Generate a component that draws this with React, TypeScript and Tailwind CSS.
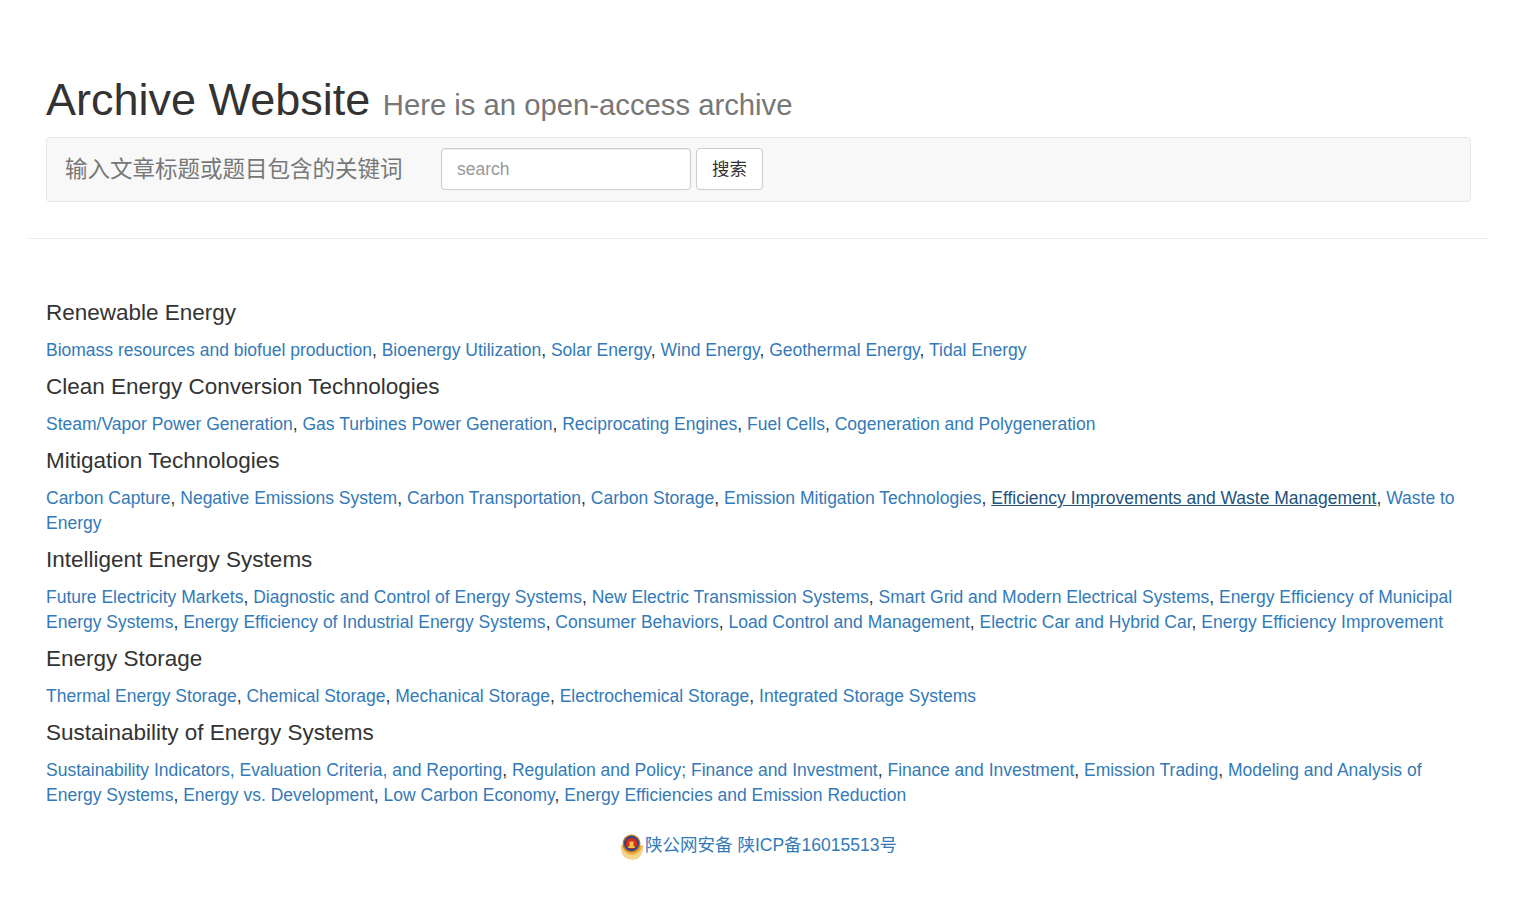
const sections: { title: string; links: string[] }[] = [
  {
    title: "Renewable Energy",
    links: [
      "Biomass resources and biofuel production",
      "Bioenergy Utilization",
      "Solar Energy",
      "Wind Energy",
      "Geothermal Energy",
      "Tidal Energy",
    ],
  },
  {
    title: "Clean Energy Conversion Technologies",
    links: [
      "Steam/Vapor Power Generation",
      "Gas Turbines Power Generation",
      "Reciprocating Engines",
      "Fuel Cells",
      "Cogeneration and Polygeneration",
    ],
  },
  {
    title: "Mitigation Technologies",
    links: [
      "Carbon Capture",
      "Negative Emissions System",
      "Carbon Transportation",
      "Carbon Storage",
      "Emission Mitigation Technologies",
      "Efficiency Improvements and Waste Management",
      "Waste to Energy",
    ],
  },
  {
    title: "Intelligent Energy Systems",
    links: [
      "Future Electricity Markets",
      "Diagnostic and Control of Energy Systems",
      "New Electric Transmission Systems",
      "Smart Grid and Modern Electrical Systems",
      "Energy Efficiency of Municipal Energy Systems",
      "Energy Efficiency of Industrial Energy Systems",
      "Consumer Behaviors",
      "Load Control and Management",
      "Electric Car and Hybrid Car",
      "Energy Efficiency Improvement",
    ],
  },
  {
    title: "Energy Storage",
    links: [
      "Thermal Energy Storage",
      "Chemical Storage",
      "Mechanical Storage",
      "Electrochemical Storage",
      "Integrated Storage Systems",
    ],
  },
  {
    title: "Sustainability of Energy Systems",
    links: [
      "Sustainability Indicators, Evaluation Criteria, and Reporting",
      "Regulation and Policy; Finance and Investment",
      "Finance and Investment",
      "Emission Trading",
      "Modeling and Analysis of Energy Systems",
      "Energy vs. Development",
      "Low Carbon Economy",
      "Energy Efficiencies and Emission Reduction",
    ],
  },
];

const Emblem = () => (
  <svg width="24" height="26" viewBox="0 0 24 26" className="shrink-0">
    <path d="M1 11 C0 17 3 24 8 25 C11 26 14 26 17 25 C21 23 24 17 23 11 Z" fill="#f5d48c" />
    <path d="M2 12 C3 17 6 20 12 21 C18 20 21 17 22 12 Z" fill="#eaae3f" />
    <circle cx="11.5" cy="9.5" r="9" fill="#b9762e" />
    <circle cx="11.5" cy="9.5" r="7.5" fill="#28408e" />
    <circle cx="11.5" cy="9.5" r="5.8" fill="#d0301f" />
    <path d="M8 12.5 h7 v1.5 h-7 Z M9.5 7.5 h4 v5 h-4 Z" fill="#eec04a" />
  </svg>
);

export default function App() {
  return (
    <div className="min-h-[898px] bg-white pl-[27px] pr-[32px] pt-[73px] font-['Liberation_Sans','Noto_Sans_CJK_SC',sans-serif] text-[17.5px] leading-[25px] text-[#333]">
      <div className="pl-[19px] pr-[17px]">
        <h1 className="text-[45px] font-medium leading-[54px] text-[#333]">
          Archive Website{" "}
          <span className="text-[29.25px] font-normal leading-none text-[#777]">
            Here is an open-access archive
          </span>
        </h1>
        <div className="mt-[10px] flex h-[65px] items-start rounded border border-[#e7e7e7] bg-[#f8f8f8] pl-[18px] pt-[10px]">
          <span className="w-[376px] text-[22.5px] leading-[44px] text-[#777]">
            输入文章标题或题目包含的关键词
          </span>
          <input
            placeholder="search"
            className="h-[42px] w-[250px] rounded border border-[#ccc] bg-white px-[15px] text-[17.5px] text-[#555] shadow-[inset_0_1px_1px_rgba(0,0,0,0.075)] outline-none placeholder:text-[#999]"
          />
          <button className="ml-[5px] h-[42px] w-[67px] rounded border border-[#ccc] bg-white text-[17.5px] text-[#333]">
            搜索
          </button>
        </div>
      </div>

      <hr className="mt-[36px] border-t border-[#eee]" />

      <div className="pl-[19px] pr-[17px] pt-[61px]">
        {sections.map((section) => (
          <div key={section.title} className="mb-[11px]">
            <h4 className="mb-[13px] text-[22.5px] font-medium leading-[25px] text-[#333]">
              {section.title}
            </h4>
            <p>
              {section.links.map((link, index) => (
                <span key={link}>
                  <a
                    href="#"
                    className={
                      link === "Efficiency Improvements and Waste Management"
                        ? "text-[#23527c] underline"
                        : "text-[#337ab7]"
                    }
                  >
                    {link}
                  </a>
                  {index < section.links.length - 1 ? ", " : ""}
                </span>
              ))}
            </p>
          </div>
        ))}
      </div>

      <div className="mt-[26px] flex items-center justify-center pl-[2px] text-[#337ab7]">
        <Emblem />
        <a href="#" className="ml-px -translate-y-[2px]">
          陕公网安备 陕ICP备16015513号
        </a>
      </div>
    </div>
  );
}
